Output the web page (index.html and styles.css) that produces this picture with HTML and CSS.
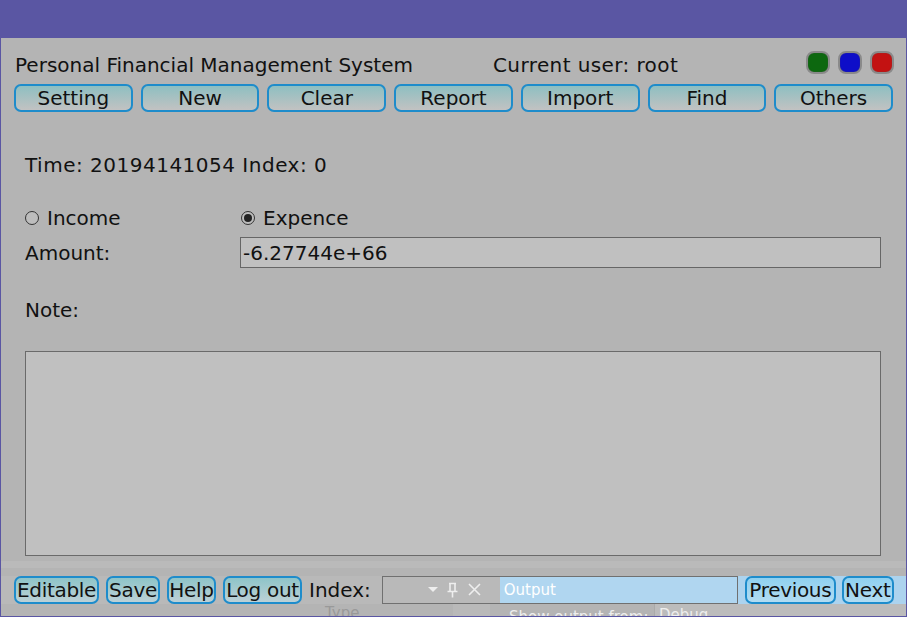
FILE: index.html
```html
<!DOCTYPE html>
<html>
<head>
<meta charset="utf-8">
<link rel="stylesheet" href="styles.css">
</head>
<body>
<div class="window">
  <div class="titlebar"></div>
  <div class="content">
    <div class="header">
      <span class="app-title">Personal Financial Management System</span>
      <span class="user">Current user: root</span>
      <div class="dots">
        <span class="dot green"></span>
        <span class="dot blue"></span>
        <span class="dot red"></span>
      </div>
    </div>
    <div class="toolbar">
      <button class="tbtn">Setting</button>
      <button class="tbtn">New</button>
      <button class="tbtn">Clear</button>
      <button class="tbtn">Report</button>
      <button class="tbtn">Import</button>
      <button class="tbtn">Find</button>
      <button class="tbtn">Others</button>
    </div>
    <div class="form">
      <div class="time">Time: 20194141054 Index: 0</div>
      <div class="radios">
        <label class="radio"><span class="circle"></span>Income</label>
        <label class="radio"><span class="circle checked"></span>Expence</label>
      </div>
      <div class="amount-row">
        <span class="label">Amount:</span>
        <div class="input">-6.27744e+66</div>
      </div>
      <div class="note">Note:</div>
      <div class="textarea"></div>
    </div>
    <div class="stripe"></div>
    <div class="bottom">
      <div class="bottom-row">
        <button class="bbtn w-edit">Editable</button>
        <button class="bbtn w-save">Save</button>
        <button class="bbtn w-help">Help</button>
        <button class="bbtn w-logout">Log out</button>
        <span class="idx">Index:</span>
        <div class="combo">
          <div class="combo-left">
            <svg class="ico" width="54" height="16" viewBox="0 0 54 16">
              <path d="M0 5 L10 5 L5 10 Z" fill="#eeeeee"/>
              <path d="M21 1.5 H28 M22 1.5 V9 M27 1.5 V9 M19.5 9.5 H29.5 M24.5 9.5 V15.5" stroke="#eeeeee" stroke-width="1.6" fill="none"/>
              <path d="M41 2 L52 13 M52 2 L41 13" stroke="#eeeeee" stroke-width="1.6"/>
            </svg>
          </div>
          <div class="combo-right">Output</div>
        </div>
        <button class="bbtn nav w-prev">Previous</button>
        <button class="bbtn nav w-next">Next</button>
      </div>
      <div class="under">
        <span class="u-type">Type</span>
        <span class="u-scroll"></span>
        <span class="u-show">Show output from:</span>
        <span class="u-debug">Debug</span>
      </div>
    </div>
  </div>
</div>
</body>
</html>
```
FILE: styles.css
```css
* { box-sizing: border-box; }
html, body { margin: 0; padding: 0; }
body {
  width: 907px;
  height: 617px;
  overflow: hidden;
  background: #b4b4b4;
  font-family: "DejaVu Sans", Verdana, sans-serif;
  color: #111;
}
.window {
  width: 907px;
  height: 617px;
  border: 1px solid #5a56a3;
  border-top: none;
  display: flex;
  flex-direction: column;
  background: #b4b4b4;
  overflow: hidden;
}
.titlebar {
  height: 38px;
  background: #5a56a3;
  margin: 0 -1px;
  flex: none;
}
.content {
  flex: 1;
  display: flex;
  flex-direction: column;
}
.header {
  display: flex;
  align-items: center;
  height: 42px;
  padding: 12px 0 0 14px;
  font-size: 20px;
}
.app-title { width: 478px; }
.user { flex: 1; letter-spacing: 0.4px; }
.dots {
  display: flex;
  gap: 8px;
  margin-right: 12px;
  margin-top: -6px;
}
.dot {
  width: 24px;
  height: 23px;
  border-radius: 8px;
  border: 2px solid #8a8a8a;
  box-shadow: inset 0 0 1px #555;
}
.dot.green { background: #0d680f; }
.dot.blue { background: #0e0ec8; }
.dot.red { background: #c31212; }
.toolbar {
  display: grid;
  grid-template-columns: repeat(7, 1fr);
  gap: 8px;
  margin: 4px 13px 0 13px;
  height: 28px;
}
.tbtn {
  font-family: inherit;
  font-size: 20px;
  color: #111;
  border: 2px solid #1e8ccb;
  border-radius: 7px;
  background: linear-gradient(#8ebfc1, #c2c2c2);
  padding: 0;
  line-height: 22px;
}
.form {
  padding: 0 25px 0 24px;
  font-size: 20px;
}
.time {
  margin-top: 41px;
  height: 24px;
  letter-spacing: 0.5px;
}
.radios {
  display: flex;
  margin-top: 29px;
  height: 24px;
}
.radio {
  display: flex;
  align-items: center;
  width: 216px;
}
.circle {
  width: 14px;
  height: 14px;
  border: 1px solid #333;
  border-radius: 50%;
  margin-right: 8px;
  background: #bdbdbd;
  display: flex;
  align-items: center;
  justify-content: center;
}
.circle.checked::after {
  content: "";
  width: 8px;
  height: 8px;
  border-radius: 50%;
  background: #222;
}
.amount-row {
  display: flex;
  align-items: center;
  margin-top: 7px;
}
.label { width: 215px; }
.input {
  flex: 1;
  height: 31px;
  border: 1px solid #666;
  background: #c0c0c0;
  padding: 3px 0 0 2px;
}
.note {
  margin-top: 30px;
  height: 24px;
}
.textarea {
  margin-top: 29px;
  height: 205px;
  border: 1px solid #6a6a6a;
  background: #c0c0c0;
}
.stripe {
  margin-top: 5px;
  height: 7px;
  background: #bababa;
}
.bottom {
  flex: 1;
  display: flex;
  flex-direction: column;
  position: relative;
}
.bottom-row {
  margin-top: 8px;
  height: 28px;
  display: flex;
  align-items: stretch;
  padding-left: 13px;
  background: linear-gradient(to right, #b9b9b9 0, #b9b9b9 736px, #acd3ee 736px);
  margin-right: -1px;
}
.bbtn {
  font-family: inherit;
  font-size: 20px;
  color: #111;
  border: 2px solid #1e8ccb;
  border-radius: 7px;
  background: linear-gradient(#8ec4c8, #bcd0d6);
  padding: 0;
  margin-right: 7px;
  line-height: 22px;
  letter-spacing: -0.3px;
  flex: none;
  white-space: nowrap;
  overflow: hidden;
}
.w-edit { width: 85px; }
.w-save { width: 54px; }
.w-help { width: 49px; }
.w-logout { width: 79px; }
.w-prev { width: 91px; }
.w-next { width: 52px; }
.bbtn.nav {
  background: linear-gradient(#8fd0f0, #b2dcf2);
  margin-right: 6px;
}
.bbtn.nav:last-child { margin-right: 0; }
.idx {
  font-size: 20px;
  line-height: 28px;
  margin-right: 11px;
}
.combo {
  width: 356px;
  border: 1px solid #707070;
  display: flex;
  margin-right: 7px;
  flex: none;
}
.combo-left {
  width: 117px;
  background: #b9b9b9;
  display: flex;
  align-items: center;
  padding-left: 45px;
}
.combo-right {
  flex: 1;
  background: #b0d6f0;
  color: #ffffff;
  font-size: 15px;
  line-height: 26px;
  padding-left: 4px;
}
.under {
  position: relative;
  flex: 1;
  overflow: hidden;
  font-size: 15px;
  color: #999;
}
.u-type { position: absolute; left: 324px; top: 0; }
.u-scroll {
  position: absolute; left: 452px; top: 0; width: 37px; height: 20px;
  background: #b9b9b9;
}
.u-show { position: absolute; left: 508px; top: 4px; color: #eee; }
.u-debug {
  position: absolute; left: 653px; top: 0; width: 260px; height: 20px;
  background: #bcbcbc; color: #eee; padding: 2px 4px; border-left: 1px solid #aaa;
}
```
